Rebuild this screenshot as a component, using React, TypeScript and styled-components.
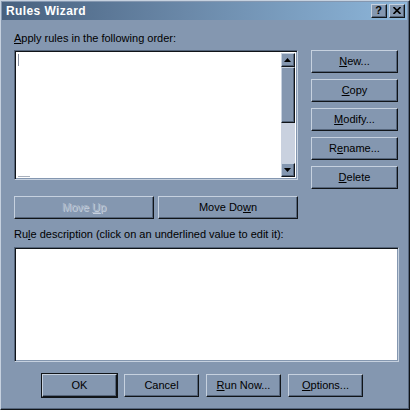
import React from "react";
import styled, { createGlobalStyle, css } from "styled-components";

const FACE = "#8497b0";
const LIGHT = "#c6d1df";
const SHADOW = "#55657b";
const DARK = "#101418";

const Global = createGlobalStyle`
  html, body { margin: 0; padding: 0; background: ${FACE}; }
  body { font-family: "Liberation Sans", Arial, sans-serif; font-size: 11px; color: #000; }
  * { box-sizing: border-box; }
`;

const Window = styled.div`
  width: 410px;
  height: 410px;
  background: ${FACE};
  border-top: 1px solid ${LIGHT};
  border-left: 1px solid ${LIGHT};
  border-right: 1px solid ${DARK};
  border-bottom: 1px solid ${DARK};
  box-shadow: inset -1px -1px 0 ${SHADOW};
  display: flex;
  flex-direction: column;
  padding: 0 1px 1px 0;
`;

const TitleBar = styled.div`
  height: 18px;
  margin: 1px 1px 0 1px;
  background: linear-gradient(to right, #48617f 0%, #6a88a8 45%, #8db6da 100%);
  display: flex;
  align-items: center;
  justify-content: space-between;
  padding: 0 2px 0 4px;
`;

const TitleText = styled.span`
  color: #fff;
  font-weight: bold;
  font-size: 12px;
  letter-spacing: 0.4px;
  line-height: 18px;
`;

const TitleButtons = styled.div`
  display: flex;
  gap: 2px;
`;

const raised = css`
  background: ${FACE};
  border-top: 1px solid ${LIGHT};
  border-left: 1px solid ${LIGHT};
  border-right: 1px solid ${DARK};
  border-bottom: 1px solid ${DARK};
  box-shadow: inset -1px -1px 0 ${SHADOW};
`;

const CapButton = styled.div`
  ${raised};
  width: 16px;
  height: 14px;
  display: flex;
  align-items: center;
  justify-content: center;
  font-weight: bold;
  font-size: 11px;
  line-height: 1;
  padding: 0 1px 1px 0;
`;

const Content = styled.div`
  flex: 1;
  display: flex;
  flex-direction: column;
  padding: 12px 0 0 13px;
`;

const Label = styled.div`
  height: 13px;
  line-height: 13px;
  white-space: nowrap;
`;

const MainRow = styled.div`
  display: flex;
  margin-top: 5px;
  gap: 13px;
`;

const LeftCol = styled.div`
  width: 284px;
  display: flex;
  flex-direction: column;
`;

const sunken = css`
  background: #fff;
  border-top: 1px solid ${SHADOW};
  border-left: 1px solid ${SHADOW};
  border-right: 1px solid ${LIGHT};
  border-bottom: 1px solid ${LIGHT};
  box-shadow: inset 1px 1px 0 ${DARK}, inset -1px -1px 0 ${FACE};
`;

const ListBox = styled.div`
  ${sunken};
  height: 130px;
  display: flex;
  padding: 2px;
`;

const ListArea = styled.div`
  flex: 1;
  position: relative;
`;

const Caret = styled.div`
  position: absolute;
  left: 1px;
  top: 1px;
  width: 1px;
  height: 12px;
  background: #8890a0;
`;

const ScrollMark = styled.div`
  position: absolute;
  left: 1px;
  bottom: 0px;
  width: 12px;
  height: 1px;
  background: #a8b0bc;
`;

const ScrollBar = styled.div`
  width: 14px;
  display: flex;
  flex-direction: column;
  background: #c9d1df;
`;

const ScrollBtn = styled.div`
  ${raised};
  width: 14px;
  height: 14px;
  display: flex;
  align-items: center;
  justify-content: center;
  padding: 0 1px 1px 0;
`;

const Thumb = styled.div`
  ${raised};
  width: 14px;
  height: 56px;
`;

const Track = styled.div`
  flex: 1;
`;

const MoveRow = styled.div`
  display: flex;
  gap: 4px;
  margin-top: 16px;
`;

const Button = styled.div<{ $w?: number; $disabled?: boolean; $default?: boolean }>`
  ${raised};
  width: ${(p) => p.$w ?? 87}px;
  height: 23px;
  display: flex;
  align-items: center;
  justify-content: center;
  white-space: pre;
  padding-bottom: 1px;
  color: ${(p) => (p.$disabled ? "#a7b4c6" : "#000")};
  text-shadow: ${(p) => (p.$disabled ? `1px 1px 0 ${LIGHT}` : "none")};
  ${(p) =>
    p.$default &&
    css`
      box-shadow: inset -1px -1px 0 ${SHADOW}, 0 0 0 1px ${DARK};
    `}
`;

const Caption = styled.span`
  white-space: pre;
`;

const RightCol = styled.div`
  display: flex;
  flex-direction: column;
  gap: 6px;
`;

const DescLabel = styled(Label)`
  margin-top: 9px;
`;

const DescBox = styled.div`
  ${sunken};
  width: 385px;
  height: 115px;
  margin-top: 6px;
`;

const BottomRow = styled.div`
  display: flex;
  gap: 7px;
  margin: 12px 0 0 28px;
`;

function UpArrow() {
  return (
    <svg width="7" height="4" viewBox="0 0 7 4">
      <path d="M3.5 0 L7 4 L0 4 Z" fill="#000" />
    </svg>
  );
}

function DownArrow() {
  return (
    <svg width="7" height="4" viewBox="0 0 7 4">
      <path d="M0 0 L7 0 L3.5 4 Z" fill="#000" />
    </svg>
  );
}

function CloseGlyph() {
  return (
    <svg width="8" height="7" viewBox="0 0 8 7">
      <path d="M0.5 0 L7.5 7 M7.5 0 L0.5 7" stroke="#000" strokeWidth="1.6" />
    </svg>
  );
}

export default function App() {
  return (
    <>
      <Global />
      <Window>
        <TitleBar>
          <TitleText>Rules Wizard</TitleText>
          <TitleButtons>
            <CapButton>?</CapButton>
            <CapButton>
              <CloseGlyph />
            </CapButton>
          </TitleButtons>
        </TitleBar>
        <Content>
          <Label>
            <u>A</u>pply rules in the following order:
          </Label>
          <MainRow>
            <LeftCol>
              <ListBox>
                <ListArea>
                  <Caret />
                  <ScrollMark />
                </ListArea>
                <ScrollBar>
                  <ScrollBtn>
                    <UpArrow />
                  </ScrollBtn>
                  <Thumb />
                  <Track />
                  <ScrollBtn>
                    <DownArrow />
                  </ScrollBtn>
                </ScrollBar>
              </ListBox>
              <MoveRow>
                <Button $w={140} $disabled>
                  <Caption>
                    {"Move "}
                    <u>U</u>p
                  </Caption>
                </Button>
                <Button $w={140}>
                  <Caption>
                    Move Do<u>w</u>n
                  </Caption>
                </Button>
              </MoveRow>
            </LeftCol>
            <RightCol>
              <Button>
                <Caption>
                  <u>N</u>ew...
                </Caption>
              </Button>
              <Button>
                <Caption>
                  <u>C</u>opy
                </Caption>
              </Button>
              <Button>
                <Caption>
                  <u>M</u>odify...
                </Caption>
              </Button>
              <Button>
                <Caption>
                  R<u>e</u>name...
                </Caption>
              </Button>
              <Button>
                <Caption>
                  <u>D</u>elete
                </Caption>
              </Button>
            </RightCol>
          </MainRow>
          <DescLabel>
            Ru<u>l</u>e description (click on an underlined value to edit it):
          </DescLabel>
          <DescBox />
          <BottomRow>
            <Button $w={75} $default>
              <Caption>OK</Caption>
            </Button>
            <Button $w={75}>
              <Caption>Cancel</Caption>
            </Button>
            <Button $w={75}>
              <Caption>
                <u>R</u>un Now...
              </Caption>
            </Button>
            <Button $w={75}>
              <Caption>
                <u>O</u>ptions...
              </Caption>
            </Button>
          </BottomRow>
        </Content>
      </Window>
    </>
  );
}
